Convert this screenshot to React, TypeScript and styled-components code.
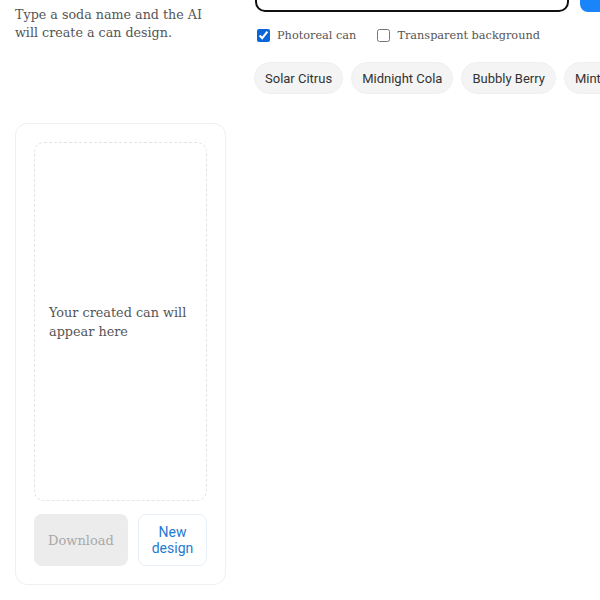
import React, { useState } from "react";
import styled, { createGlobalStyle } from "styled-components";

const GlobalStyle = createGlobalStyle`
  html, body {
    margin: 0;
    padding: 0;
    background: #fff;
    overflow: hidden;
  }
  body {
    font-family: "DejaVu Serif", "Liberation Serif", serif;
  }
`;

const SUGGESTIONS = ["Solar Citrus", "Midnight Cola", "Bubbly Berry", "Mint Fizz", "Peach Pop"];

export default function App() {
  const [photoreal, setPhotoreal] = useState(true);
  const [transparent, setTransparent] = useState(false);
  const [name, setName] = useState("");

  return (
    <>
      <GlobalStyle />
      <Page>
        <Sidebar>
          <Intro>Type a soda name and the AI will create a can design.</Intro>
          <Card>
            <Preview>
              <PreviewText>Your created can will appear here</PreviewText>
            </Preview>
            <Actions>
              <DownloadButton disabled>Download</DownloadButton>
              <NewButton onClick={() => setName("")}>
                New
                <br />
                design
              </NewButton>
            </Actions>
          </Card>
        </Sidebar>
        <Main>
          <PromptRow>
            <PromptInput value={name} onChange={(e) => setName(e.target.value)} />
            <CreateButton>Create</CreateButton>
          </PromptRow>
          <Options>
            <Option>
              <input
                type="checkbox"
                checked={photoreal}
                onChange={(e) => setPhotoreal(e.target.checked)}
              />
              Photoreal can
            </Option>
            <Option>
              <input
                type="checkbox"
                checked={transparent}
                onChange={(e) => setTransparent(e.target.checked)}
              />
              Transparent background
            </Option>
          </Options>
          <Chips>
            {SUGGESTIONS.map((s) => (
              <Chip key={s} onClick={() => setName(s)}>
                {s}
              </Chip>
            ))}
          </Chips>
        </Main>
      </Page>
    </>
  );
}

// the view sits scrolled a little, so the prompt bar is partly above the top edge
const Page = styled.div`
  display: flex;
  gap: 28px;
  padding: 0 15px;
  margin-top: -37px;
  width: 900px;
`;

const Sidebar = styled.aside`
  width: 211px;
  flex-shrink: 0;
  display: flex;
  flex-direction: column;
  padding-top: 43px;
`;

const Intro = styled.p`
  margin: 0 0 81px;
  font-size: 12.7px;
  line-height: 18px;
  color: #555;
`;

const Card = styled.div`
  height: 462px;
  box-sizing: border-box;
  border: 1px solid #efefef;
  border-radius: 12px;
  padding: 18px;
  display: flex;
  flex-direction: column;
  gap: 13px;
`;

const Preview = styled.div`
  flex: 1;
  border: 1px dashed #e4e4e4;
  border-radius: 10px;
  display: flex;
  align-items: center;
  padding: 0 14px;
`;

const PreviewText = styled.p`
  margin: 0;
  font-size: 12.8px;
  line-height: 19px;
  color: #555;
`;

const Actions = styled.div`
  display: flex;
  gap: 10px;
  height: 52px;
`;

const DownloadButton = styled.button`
  flex: 1;
  border: none;
  border-radius: 8px;
  background: #ececec;
  color: #a8a8a8;
  font-family: "DejaVu Serif", "Liberation Serif", serif;
  font-size: 13px;
`;

const NewButton = styled.button`
  width: 69px;
  border: 1px solid #e6eef7;
  border-radius: 8px;
  background: #fff;
  color: #1f7ad1;
  font-family: Roboto, "Noto Sans", sans-serif;
  font-size: 14px;
  line-height: 16px;
`;

const Main = styled.main`
  display: flex;
  flex-direction: column;
`;

const PromptRow = styled.div`
  display: flex;
  gap: 11px;
  padding-left: 1px;
`;

const PromptInput = styled.input`
  width: 314px;
  height: 49px;
  box-sizing: border-box;
  border: 2px solid #111;
  border-radius: 10px;
  padding: 0 12px;
  font-size: 15px;
  outline: none;
`;

const CreateButton = styled.button`
  width: 90px;
  height: 49px;
  border: none;
  border-radius: 8px;
  background: #1a84fa;
  color: #fff;
  font-family: Roboto, sans-serif;
  font-size: 15px;
`;

const Options = styled.div`
  display: flex;
  gap: 18px;
  margin-top: 17px;
`;

const Option = styled.label`
  display: flex;
  align-items: center;
  gap: 7px;
  font-size: 11.3px;
  color: #555;

  input {
    margin: 0 0 0 3px;
    width: 13px;
    height: 13px;
    accent-color: #0a66d8;
  }
`;

const Chips = styled.div`
  display: flex;
  gap: 8px;
  margin-top: 20px;
`;

const Chip = styled.button`
  flex-shrink: 0;
  height: 32px;
  padding: 0 10px;
  border: 1px solid #f0f0f0;
  border-radius: 16px;
  background: #f4f4f4;
  color: #333;
  font-family: Roboto, "Noto Sans", sans-serif;
  font-size: 13px;
  white-space: nowrap;
`;
